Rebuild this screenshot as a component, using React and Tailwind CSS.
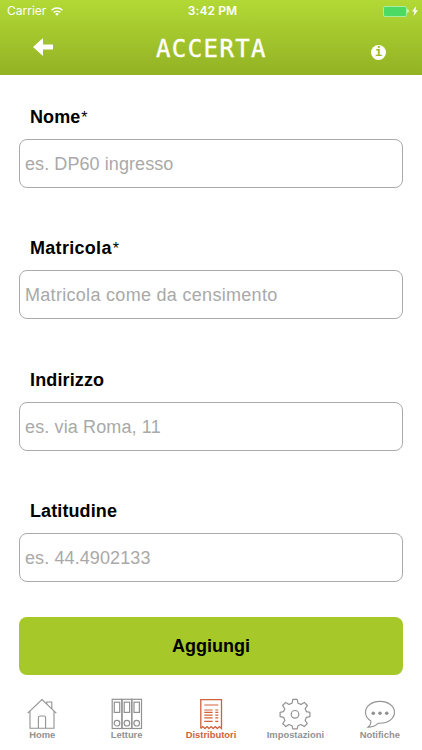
import React from 'react';

const fields = [
    { id: 'nome', label: 'Nome', required: true, placeholder: 'es. DP60 ingresso', tracking: 'tracking-[0.08px]' },
    { id: 'matricola', label: 'Matricola', required: true, placeholder: 'Matricola come da censimento', tracking: 'tracking-[0.3px]' },
    { id: 'indirizzo', label: 'Indirizzo', placeholder: 'es. via Roma, 11', tracking: 'tracking-[0.13px]' },
    { id: 'latitudine', label: 'Latitudine', placeholder: 'es. 44.4902133', tracking: 'tracking-[0.1px]' },
];

function HomeIcon() {
    return (
        <svg className="w-8 h-8" viewBox="0 0 32 32" fill="none" stroke="currentColor" strokeWidth="1.1">
            <path d="M1.7 15.2 16 1.6l14.3 13.6M4 13.2v17.1h24V13.2M12.4 30.3V19.7q0-1.7 1.7-1.7h3.8q1.7 0 1.7 1.7v10.6M20.8 6V4h5v7" />
        </svg>
    );
}

function BindersIcon() {
    return (
        <svg className="w-8 h-8" viewBox="0 0 32 32" fill="none" stroke="currentColor" strokeWidth="1.2">
            {[1.2, 11.1, 20.9].map((x) => (
                <g key={x}>
                    <rect x={x} y="1.3" width="9.6" height="29.2" />
                    <rect x={x + 2.1} y="4.2" width="5.4" height="10.2" />
                    <circle cx={x + 4.8} cy="25.2" r="2.8" />
                </g>
            ))}
        </svg>
    );
}

function ReceiptIcon() {
    return (
        <svg className="w-8 h-8" viewBox="0 0 32 32" fill="none" stroke="currentColor" strokeWidth="1.3">
            <path d="M5.8 30.5V1.7h20.7v28.8l-2.1-1.9-2.1 1.9-2-1.9-2.1 1.9-2.1-1.9-2.1 1.9-2-1.9-2.1 1.9-2.1-1.9-2.1 1.9" />
            <path strokeWidth="1.2" d="M9.3 7h14M9.3 12h8.3M9.3 14.3h8.3M9.3 17.2h8.3M9.3 19.8h8.3M9.3 23.3h8.3M20.3 12h3M20.3 14.3h3M20.3 17.2h3M20.3 19.8h3M20.3 23.3h3" />
        </svg>
    );
}

function GearIcon() {
    return (
        <svg className="w-8 h-8" viewBox="0 0 32 32" fill="none" stroke="currentColor" strokeWidth="1.2" strokeLinejoin="round">
            <path d="M13.8 1.4h4.4l.8 3.8 3 1.2L25.3 4.400l3.100 3.100-2.200 3.200 1.300 3 3.400.7v4.200l-3.500.7-1.300 3.100 2.200 3.100-3.100 3.100-3.200-2.100-3 1.200-.8 3.100h-4.400l-.7-3.100-3.100-1.200-3.200 2.100-3.100-3.100 2.200-3.100-1.300-3.100-3.500-.7v-4.200l3.400-.7 1.300-3-2.200-3.200 3.100-3.100L10 6.400l3.100-1.200z" />
            <circle cx="16" cy="16.3" r="3.8" />
        </svg>
    );
}

function ChatIcon() {
    return (
        <svg className="w-8 h-8" viewBox="0 0 32 32" fill="none" stroke="currentColor" strokeWidth="1.1">
            <path d="M16 3.4c8 0 14.5 4.7 14.5 10.9S24 25.2 16 25.2h-1.8c-2.3 2.7-5.9 4.1-10.2 3.9 2.2-1.5 3.1-3.6 2.8-6.2C3.6 21 1.5 17.8 1.5 14.3 1.5 8.1 8 3.4 16 3.4z" />
            <g fill="currentColor" stroke="none">
                <circle cx="9.3" cy="15.3" r="1.8" />
                <circle cx="16" cy="15.3" r="1.8" />
                <circle cx="22.7" cy="15.3" r="1.8" />
            </g>
        </svg>
    );
}

const tabs = [
    { id: 'home', label: 'Home', icon: HomeIcon },
    { id: 'letture', label: 'Letture', icon: BindersIcon },
    { id: 'distributori', label: 'Distributori', icon: ReceiptIcon },
    { id: 'impostazioni', label: 'Impostazioni', icon: GearIcon },
    { id: 'notifiche', label: 'Notifiche', icon: ChatIcon },
];

function StatusBar() {
    return (
        <div className="grid grid-cols-3 items-center h-[22px] pl-[7px] pr-1 text-xs font-['Inter',sans-serif]">
            <div className="flex items-center gap-[5px]">
                <span className="text-[12px]">Carrier</span>
                <svg className="w-3 h-[9px]" viewBox="0 0 12 9" fill="none" stroke="currentColor" strokeWidth="1.5">
                    <path d="M.5 3.3a8 8 0 0 1 11 0M2.6 5.5a5 5 0 0 1 6.8 0" />
                    <path d="M6 8.8 4.1 6.9a2.7 2.7 0 0 1 3.8 0z" fill="currentColor" stroke="none" />
                </svg>
            </div>
            <span className="text-center font-semibold tracking-[0.1px]">3:42 PM</span>
            <div className="flex items-center justify-end">
                <div className="w-6 h-[11px] rounded-[2px] border border-[#a9eda0] bg-[#4cd964]" />
                <div className="w-[2px] h-1 rounded-r-full bg-[#d5f39b]" />
                <svg className="w-[6px] h-[10px] ml-[3px]" viewBox="0 0 6 10" fill="currentColor">
                    <path d="M4.3 0 0 5.6h2.5L1.5 10 6 4.3H3.4z" />
                </svg>
            </div>
        </div>
    );
}

export default function App() {
    const activeTab = 'distributori';

    return (
        <div className="flex flex-col w-full h-[750px] overflow-hidden bg-white font-['Liberation_Sans',sans-serif]">
            {/* Header */}
            <header className="h-[75px] shrink-0 text-white bg-linear-to-b from-[#b2d935] to-[#93b224]">
                <StatusBar />
                <div className="grid grid-cols-[1fr_auto_1fr] items-center h-[53px] pl-[33px] pr-9">
                    <button aria-label="Indietro">
                        <svg className="w-5 h-[18px] mb-[3px]" viewBox="0 0 20 18" fill="currentColor">
                            <path d="M0 9 10 0v6.5h10v5H10V18z" />
                        </svg>
                    </button>
                    <h1 className="pt-[2px] pl-[4px] font-['DejaVu_Sans_Mono',monospace] text-[24px] leading-[51px] tracking-[1.4px] [-webkit-text-stroke:0.4px_white]">ACCERTA</h1>
                    <button
                        aria-label="Informazioni"
                        className="justify-self-end mt-[7px] w-[15px] h-[15px] rounded-full bg-white text-[#9aba27] font-['DejaVu_Sans_Mono',monospace] font-bold text-[12px] leading-[14px]"
                    >
                        i
                    </button>
                </div>
            </header>

            {/* Form */}
            <main className="flex flex-col px-[19px] pt-[30px]">
                {fields.map((field) => (
                    <div key={field.id} className="h-[131.25px]">
                        <label htmlFor={field.id} className={`block h-6 ml-[11px] mb-[10px] text-lg leading-6 font-bold text-black ${field.tracking}`}>
                            {field.label}
                            {field.required && <span className="ml-[1px] text-[16px] font-normal">*</span>}
                        </label>
                        <input
                            id={field.id}
                            placeholder={field.placeholder}
                            className={`block w-full h-[49px] px-[5px] pt-[2px] rounded-[8px] border border-[#aaaaaa] text-[18px] placeholder:text-[#a9a9a9] ${field.tracking}`}
                        />
                    </div>
                ))}
                <button className="h-[58px] -mt-[13px] rounded-[8px] bg-[#a6c929] text-lg font-bold text-black">Aggiungi</button>
            </main>

            {/* Tab bar */}
            <nav className="grid grid-cols-5 mt-[23px]">
                {tabs.map((tab) => (
                    <button
                        key={tab.id}
                        className={`flex flex-col items-center text-[9.4px] leading-3 font-bold ${
                            activeTab === tab.id ? 'text-[#cf613b]' : 'text-[#929292]'
                        }`}
                    >
                        <tab.icon />
                        <span className="-mt-[1px]">{tab.label}</span>
                    </button>
                ))}
            </nav>
        </div>
    );
}
